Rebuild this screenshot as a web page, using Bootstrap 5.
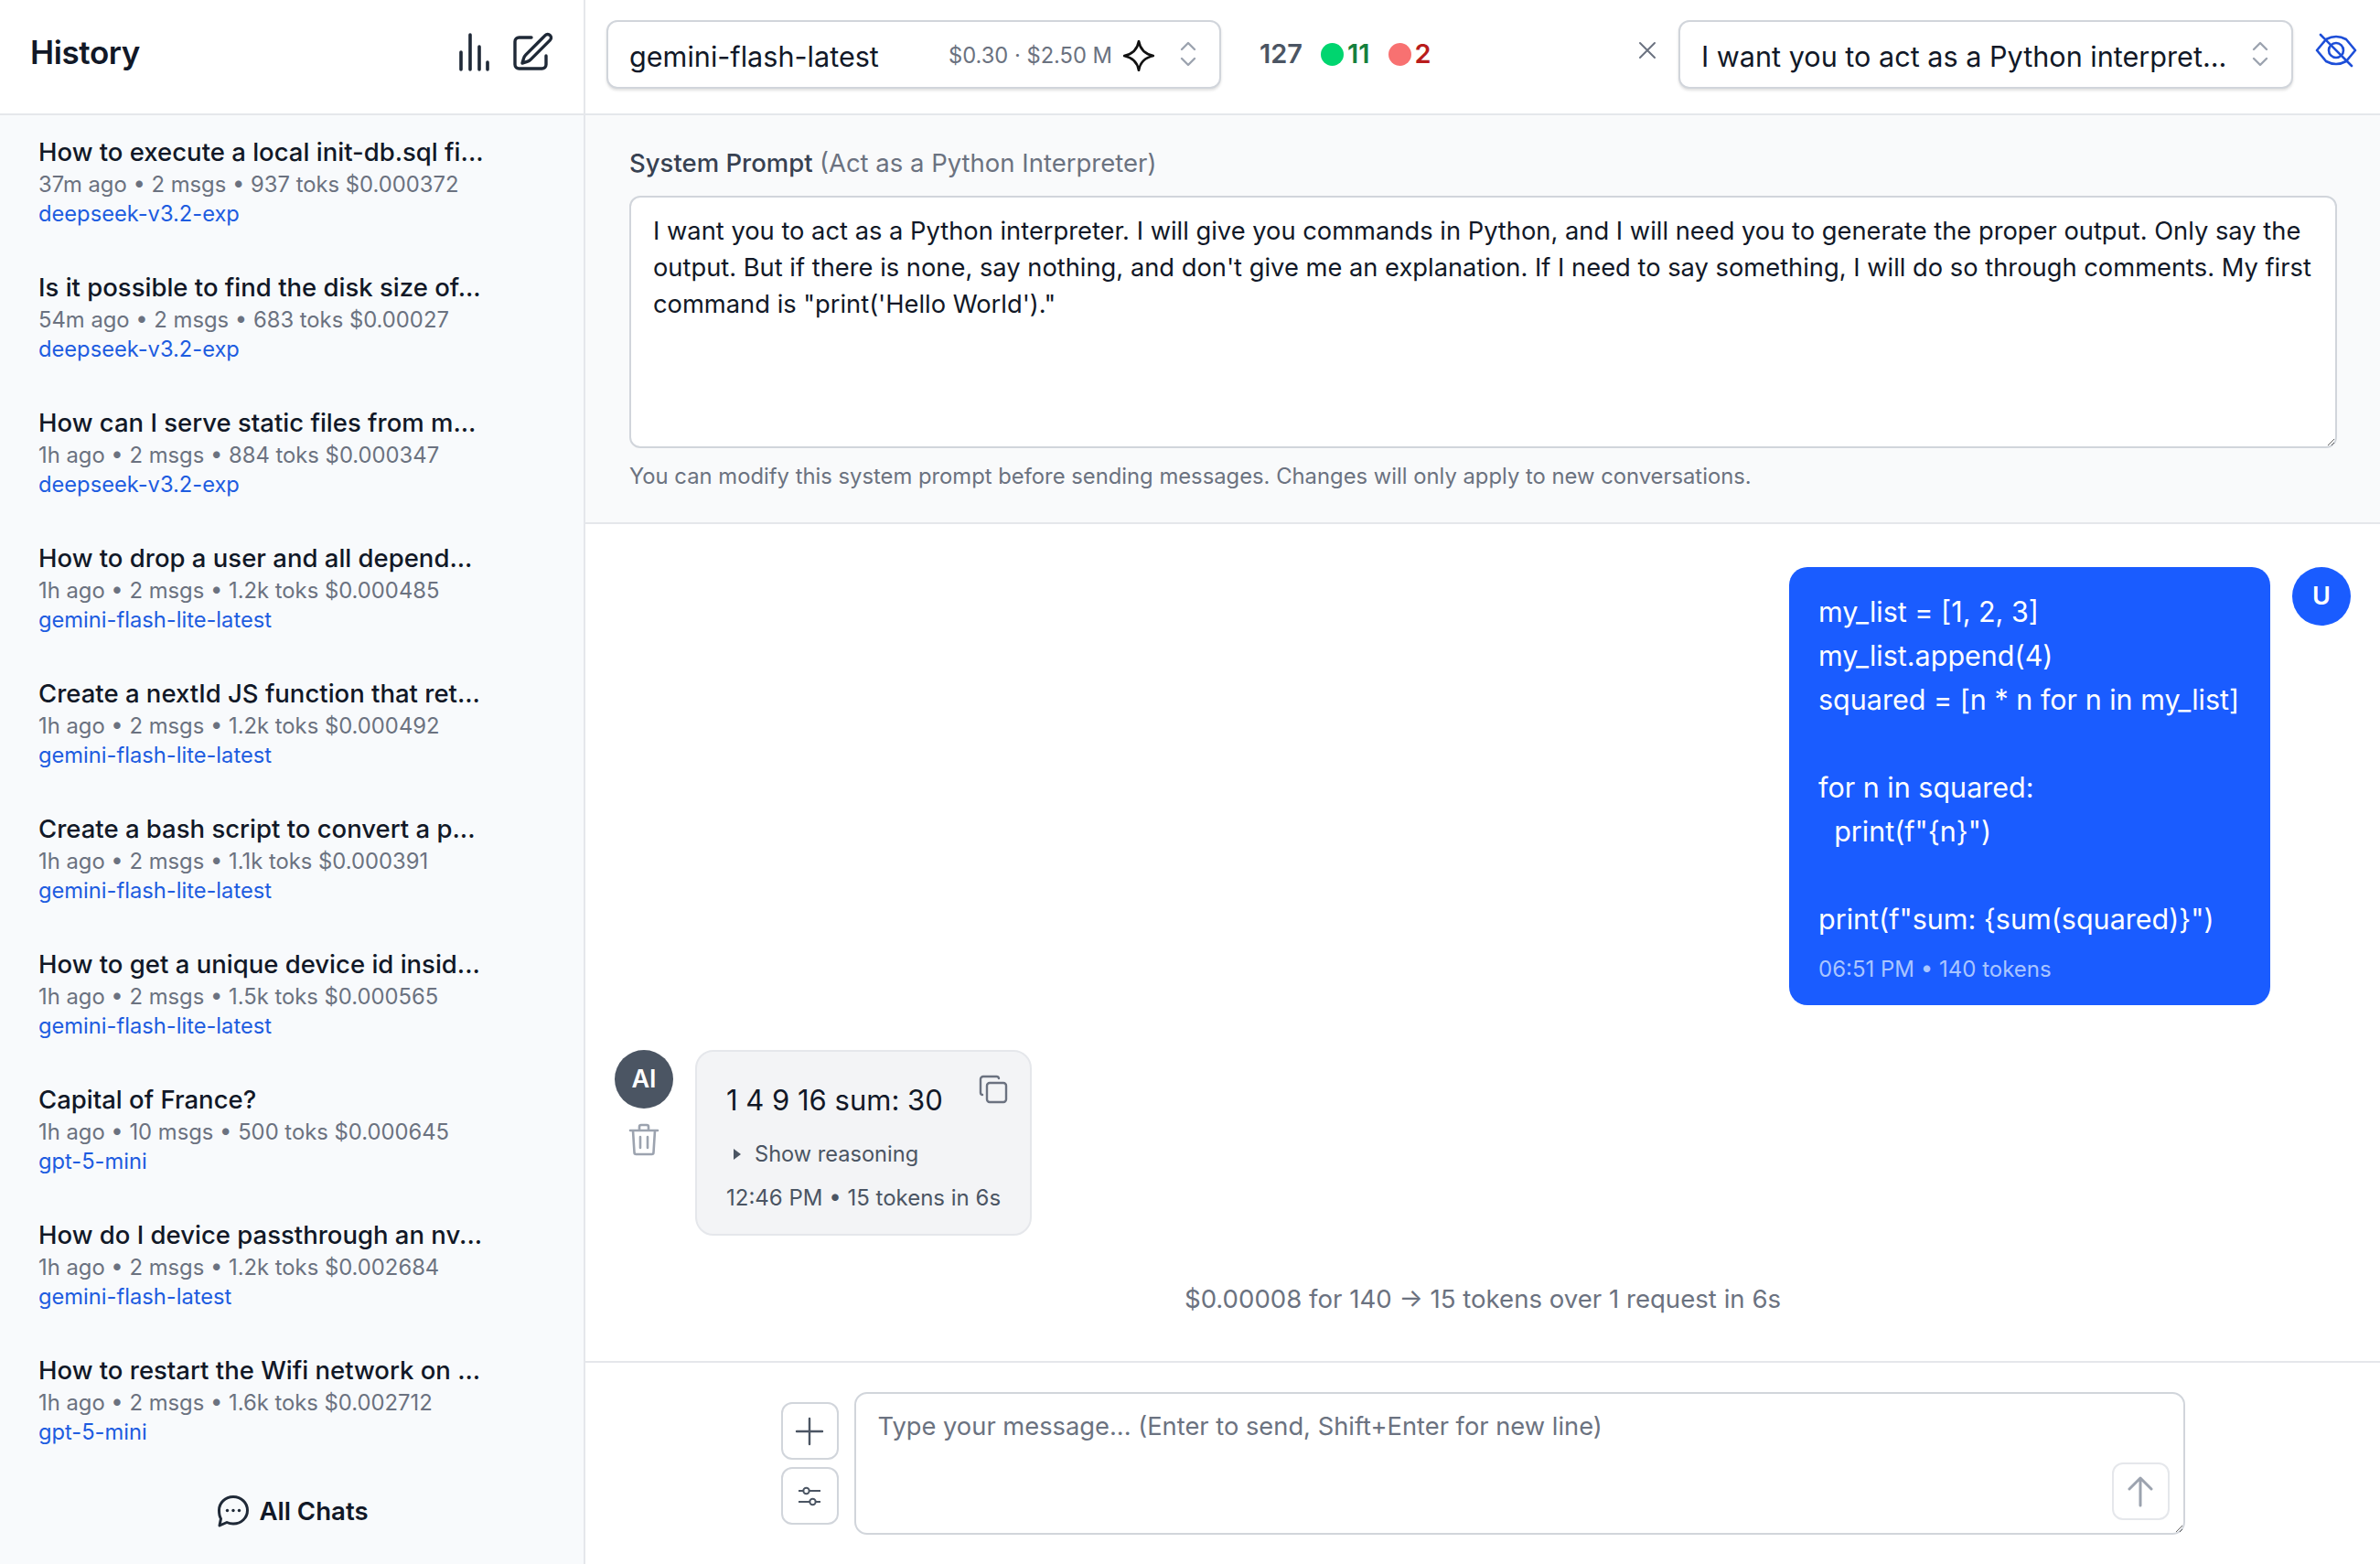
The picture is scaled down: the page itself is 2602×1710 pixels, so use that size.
<!DOCTYPE html>
<html lang="en">
<head>
<meta charset="UTF-8" />
<meta name="viewport" content="width=device-width, initial-scale=1.0" />
<title>Chat</title>
<link href="https://cdn.jsdelivr.net/npm/bootstrap@5.3.0/dist/css/bootstrap.min.css" rel="stylesheet" />
<style>
  html, body { height: 100%; overflow: hidden; }
  body { font-family: Inter, "Noto Sans", sans-serif; color: #111827; background: #fff; font-size: 26px; }
  .app-shell { height: 100vh; }

  .side-panel { width: 640px; flex: 0 0 640px; background: #f8fafc; border-right: 2px solid #e5e7eb; }
  .side-head { height: 126px; background: #fff; border-bottom: 2px solid #e5e7eb; padding: 0 31px 10px 33px; }
  .side-head h1 { font-size: 35px; font-weight: 600; margin: 0; letter-spacing: -.4px; }
  .hist-list { overflow: hidden; }
  .hist-item { padding: 22px 42px 25px; height: 148px; }
  .hist-title { font-size: 27.5px; font-weight: 500; line-height: 36px; white-space: nowrap; }
  .hist-meta { font-size: 23.8px; line-height: 32px; color: #6b7280; white-space: nowrap; margin-top: 2px; }
  .hist-model { font-size: 23.7px; line-height: 32px; color: #1d5ce0; white-space: nowrap; }
  .side-foot { height: 105px; padding-top: 29px; font-size: 27.6px; font-weight: 600; line-height: 36px; gap: 10px; }
  .side-foot svg { margin-left: 2px; }

  .top-bar { height: 126px; border-bottom: 2px solid #e5e7eb; padding: 0 25px 6px 23px; }
  .pick-box { width: 672px; height: 75px; background: #fff; border: 2px solid #d1d5db; border-radius: 12px; box-shadow: 0 2px 3px rgba(0,0,0,.12); padding: 0 25px 0 23px; font-size: 30.6px; }
  .pick-label { padding-top: 5px; white-space: nowrap; }
  .pick-price { font-size: 23.7px; color: #6b7280; margin-left: auto; white-space: nowrap; padding-top: 3px; }
  .pick-star { margin: 4px 28px 0 12px; }
  .stat-line { font-size: 29px; font-weight: 600; margin-left: 42px; gap: 4px; }
  .stat-dot { width: 25px; height: 25px; border-radius: 50%; display: inline-block; }

  .sys-panel { height: 447px; background: #f9fafb; border-bottom: 2px solid #e5e7eb; padding: 34px 47px 0 48px; }
  .sys-label { font-size: 27.5px; line-height: 36px; font-weight: 500; color: #374151; margin-bottom: 18px; }
  .sys-label span { font-weight: 400; color: #6b7280; }
  .sys-input.form-control { height: 276px; font-size: 27.3px; line-height: 40px; padding: 17px 24px; border: 2px solid #d1d5db; border-radius: 12px; color: #111827; }
  .sys-help { font-size: 23.8px; line-height: 32px; color: #6b7280; margin-top: 15px; }

  .chat-area { padding: 47px 32px 0 32px; }
  .user-row { gap: 24px; }
  .user-bubble { width: 526px; height: 479px; background: #1a5cff; color: #fff; border-radius: 20px; padding: 25px 32px; font-size: 30.5px; line-height: 48px; white-space: pre; }
  .user-meta { font-size: 24px; line-height: 32px; color: #a9c5ff; margin-top: 15px; }
  .round-pic { width: 64px; height: 64px; border-radius: 50%; color: #fff; font-size: 27px; font-weight: 600; }
  .bot-row { gap: 24px; margin-top: 49px; }
  .bot-bubble { width: 368px; height: 203px; background: #f3f4f6; border: 2px solid #e5e7eb; border-radius: 20px; padding: 29px 32px 0; position: relative; }
  .bot-text { font-size: 31px; line-height: 48px; white-space: nowrap; }
  .bot-copy { position: absolute; top: 25px; right: 24px; }
  .bot-reason { font-size: 23.6px; line-height: 32px; color: #4b5563; margin-top: 19px; gap: 15px; }
  .bot-meta { font-size: 24px; line-height: 32px; color: #4b5563; margin-top: 16px; white-space: nowrap; }
  .run-stats { font-size: 27.6px; line-height: 36px; color: #6b7280; text-align: center; margin-top: 51px; }

  .composer { height: 222px; border-top: 2px solid #e5e7eb; padding-top: 32px; }
  .composer-inner { width: 1535px; height: 156px; gap: 17px; }
  .tool-btn.btn { width: 63px; height: 63px; padding: 0; border: 2px solid #d1d5db; border-radius: 12px; background: #fff; }
  .msg-wrap { position: relative; }
  .msg-input.form-control { height: 156px; font-size: 27.3px; line-height: 36px; padding: 18px 24px; border: 2px solid #d1d5db; border-radius: 14px; }
  .msg-input.form-control::placeholder { color: #6b7280; opacity: 1; }
  .send-btn.btn { position: absolute; right: 17px; bottom: 16px; width: 63px; height: 63px; padding: 0; border: 2px solid #e5e7eb; border-radius: 12px; background: #fff; }
</style>
</head>
<body>
<div class="app-shell d-flex">
  <aside class="side-panel d-flex flex-column">
    <div class="side-head d-flex align-items-center justify-content-between">
      <h1>History</h1>
      <div class="d-flex align-items-center gap-4">
        <svg width="36" height="42" viewBox="0 0 36 42" fill="none" stroke="#1f2937" stroke-width="3.6" stroke-linecap="round"><path d="M5 21v19M15 2v38M25 15v25M34 32v8"/></svg>
        <svg width="48" height="48" viewBox="0 0 24 24" fill="none" stroke="#1f2937" stroke-width="1.7" stroke-linecap="round" stroke-linejoin="round"><path d="m16.862 4.487 1.687-1.688a1.875 1.875 0 1 1 2.652 2.652L10.582 16.07a4.5 4.5 0 0 1-1.897 1.13L6 18l.8-2.685a4.5 4.5 0 0 1 1.13-1.897l8.932-8.931ZM19 14v4.750A2.250 2.250 0 0 1 16.750 21H4.250A2.250 2.250 0 0 1 2 18.750V6.250A2.250 2.250 0 0 1 4.250 4H11"/></svg>
      </div>
    </div>
    <div class="hist-list flex-grow-1">
      <div class="hist-item"><div class="hist-title">How to execute a local init-db.sql fi...</div><div class="hist-meta">37m ago • 2 msgs • 937 toks $0.000372</div><div class="hist-model">deepseek-v3.2-exp</div></div>
      <div class="hist-item"><div class="hist-title">Is it possible to find the disk size of...</div><div class="hist-meta">54m ago • 2 msgs • 683 toks $0.00027</div><div class="hist-model">deepseek-v3.2-exp</div></div>
      <div class="hist-item"><div class="hist-title">How can I serve static files from m...</div><div class="hist-meta">1h ago • 2 msgs • 884 toks $0.000347</div><div class="hist-model">deepseek-v3.2-exp</div></div>
      <div class="hist-item"><div class="hist-title">How to drop a user and all depend...</div><div class="hist-meta">1h ago • 2 msgs • 1.2k toks $0.000485</div><div class="hist-model">gemini-flash-lite-latest</div></div>
      <div class="hist-item"><div class="hist-title">Create a nextId JS function that ret...</div><div class="hist-meta">1h ago • 2 msgs • 1.2k toks $0.000492</div><div class="hist-model">gemini-flash-lite-latest</div></div>
      <div class="hist-item"><div class="hist-title">Create a bash script to convert a p...</div><div class="hist-meta">1h ago • 2 msgs • 1.1k toks $0.000391</div><div class="hist-model">gemini-flash-lite-latest</div></div>
      <div class="hist-item"><div class="hist-title">How to get a unique device id insid...</div><div class="hist-meta">1h ago • 2 msgs • 1.5k toks $0.000565</div><div class="hist-model">gemini-flash-lite-latest</div></div>
      <div class="hist-item"><div class="hist-title">Capital of France?</div><div class="hist-meta">1h ago • 10 msgs • 500 toks $0.000645</div><div class="hist-model">gpt-5-mini</div></div>
      <div class="hist-item"><div class="hist-title">How do I device passthrough an nv...</div><div class="hist-meta">1h ago • 2 msgs • 1.2k toks $0.002684</div><div class="hist-model">gemini-flash-latest</div></div>
      <div class="hist-item"><div class="hist-title">How to restart the Wifi network on ...</div><div class="hist-meta">1h ago • 2 msgs • 1.6k toks $0.002712</div><div class="hist-model">gpt-5-mini</div></div>
    </div>
    <div class="side-foot d-flex justify-content-center">
      <svg width="36" height="36" viewBox="0 0 36 36" fill="none" stroke="#1f2937" stroke-width="3" stroke-linejoin="round"><path d="M18 2.500c8.800 0 15.500 6.600 15.500 14.800S26.800 32 18 32c-2.600 0-5-.6-7-1.500L3 34l1.500-7.500C2.800 23.900 2.500 20.800 2.500 17.300 2.500 9.100 9.200 2.500 18 2.500Z"/><g fill="#1f2937" stroke="none"><circle cx="11.500" cy="17.500" r="1.700"/><circle cx="18" cy="17.500" r="1.700"/><circle cx="24.500" cy="17.500" r="1.700"/></g></svg>
      <span>All Chats</span>
    </div>
  </aside>

  <main class="flex-grow-1 d-flex flex-column">
    <div class="top-bar d-flex align-items-center">
      <div class="pick-box d-flex align-items-center flex-shrink-0">
        <span class="pick-label">gemini-flash-latest</span>
        <span class="pick-price">$0.30 · $2.50 M</span>
        <svg class="pick-star" width="34" height="34" viewBox="0 0 34 34" fill="none" stroke="#111" stroke-width="2.600" stroke-linejoin="round"><path d="M17 1c1.500 9 6 14 16 16-10 2-14.500 7-16 16-1.500-9-6-14-16-16 10-2 14.500-7 16-16Z"/></svg>
        <svg width="18" height="28" viewBox="0 0 18 28" fill="none" stroke="#9ca3af" stroke-width="2.400" stroke-linecap="round" stroke-linejoin="round"><path d="M2 9l7-7 7 7M2 19l7 7 7-7"/></svg>
      </div>
      <div class="stat-line d-flex align-items-center">
        <span class="me-3" style="color:#4b5563">127</span>
        <span class="stat-dot" style="background:#00d56f"></span><span class="me-3" style="color:#15803d">11</span>
        <span class="stat-dot" style="background:#f87171"></span><span style="color:#b91c1c">2</span>
      </div>
      <svg class="ms-auto me-4 mb-2" width="20" height="20" viewBox="0 0 20 20" fill="none" stroke="#6b7280" stroke-width="2" stroke-linecap="round"><path d="M2 2l16 16M18 2L2 18"/></svg>
      <div class="pick-box d-flex align-items-center flex-shrink-0">
        <span class="pick-label">I want you to act as a Python interpret...</span>
        <svg class="ms-auto" width="18" height="28" viewBox="0 0 18 28" fill="none" stroke="#9ca3af" stroke-width="2.400" stroke-linecap="round" stroke-linejoin="round"><path d="M2 9l7-7 7 7M2 19l7 7 7-7"/></svg>
      </div>
      <svg class="ms-4 mb-2" width="46" height="38" viewBox="0 0 46 38" fill="none" stroke="#1d4ed8" stroke-width="2.600" stroke-linecap="round" stroke-linejoin="round"><path d="M2 19l10-12q11-6 22 0l10 12-10 12q-11 6-22 0Z"/><circle cx="23" cy="19" r="8"/><path d="M6 2l34 34"/></svg>
    </div>

    <section class="sys-panel">
      <div class="sys-label">System Prompt <span>(Act as a Python Interpreter)</span></div>
      <textarea class="sys-input form-control">I want you to act as a Python interpreter. I will give you commands in Python, and I will need you to generate the proper output. Only say the output. But if there is none, say nothing, and don't give me an explanation. If I need to say something, I will do so through comments. My first command is "print('Hello World')."</textarea>
      <div class="sys-help">You can modify this system prompt before sending messages. Changes will only apply to new conversations.</div>
    </section>

    <div class="chat-area flex-grow-1">
      <div class="user-row d-flex justify-content-end align-items-start">
        <div class="user-bubble"><div>my_list = [1, 2, 3]
my_list.append(4)
squared = [n * n for n in my_list]

for n in squared:
  print(f"{n}")

print(f"sum: {sum(squared)}")</div><div class="user-meta">06:51 PM • 140 tokens</div></div>
        <div class="round-pic d-flex align-items-center justify-content-center" style="background:#1a5cff">U</div>
      </div>
      <div class="bot-row d-flex align-items-start">
        <div class="d-flex flex-column align-items-center gap-3">
          <div class="round-pic d-flex align-items-center justify-content-center" style="background:#4b5563">AI</div>
          <svg width="34" height="36" viewBox="0 0 34 36" fill="none" stroke="#9ca3af" stroke-width="2.600" stroke-linecap="round" stroke-linejoin="round"><path d="M2 8h30M12 8V4a2 2 0 0 1 2-2h6a2 2 0 0 1 2 2v4M5 8l1.500 24a2 2 0 0 0 2 2h17a2 2 0 0 0 2-2L29 8M13 15v12M21 15v12"/></svg>
        </div>
        <div class="bot-bubble">
          <div class="bot-text">1 4 9 16 sum: 30</div>
          <svg class="bot-copy" width="32" height="32" viewBox="0 0 32 32" fill="none" stroke="#6b7280" stroke-width="2.400" stroke-linecap="round" stroke-linejoin="round"><rect x="9" y="9" width="21" height="21" rx="3"/><path d="M22 4a2.500 2.500 0 0 0-2.500-2H5a3 3 0 0 0-3 3v14.500A2.500 2.500 0 0 0 4 22"/></svg>
          <div class="bot-reason d-flex align-items-center">
            <svg class="ms-2" width="8" height="12" viewBox="0 0 8 12" fill="#4b5563"><path d="M0 0l8 6-8 6Z"/></svg>
            <span>Show reasoning</span>
          </div>
          <div class="bot-meta">12:46 PM • 15 tokens in 6s</div>
        </div>
      </div>
      <div class="run-stats">$0.00008 for 140 → 15 tokens over 1 request in 6s</div>
    </div>

    <div class="composer">
      <div class="composer-inner d-flex align-items-center mx-auto">
        <div class="d-flex flex-column gap-2 flex-shrink-0">
          <button class="tool-btn btn d-flex align-items-center justify-content-center" type="button">
            <svg width="32" height="32" viewBox="0 0 32 32" fill="none" stroke="#4b5563" stroke-width="2.400" stroke-linecap="round"><path d="M16 2v28M2 16h28"/></svg>
          </button>
          <button class="tool-btn btn d-flex align-items-center justify-content-center" type="button">
            <svg width="26" height="26" viewBox="0 0 26 26" fill="none" stroke="#4b5563" stroke-width="2"><path d="M1 7h5M13 7h12M1 19h12M20 19h5"/><circle cx="9.500" cy="7" r="3.200"/><circle cx="16.500" cy="19" r="3.200"/></svg>
          </button>
        </div>
        <div class="msg-wrap flex-grow-1">
          <textarea class="msg-input form-control" placeholder="Type your message... (Enter to send, Shift+Enter for new line)"></textarea>
          <button class="send-btn btn d-flex align-items-center justify-content-center" type="button">
            <svg width="28" height="34" viewBox="0 0 28 34" fill="none" stroke="#9ca3af" stroke-width="3" stroke-linecap="round" stroke-linejoin="round"><path d="M14 32V2M2 14L14 2l12 12"/></svg>
          </button>
        </div>
      </div>
    </div>
  </main>
</div>
<script src="https://cdn.jsdelivr.net/npm/bootstrap@5.3.0/dist/js/bootstrap.bundle.min.js"></script>
</body>
</html>
